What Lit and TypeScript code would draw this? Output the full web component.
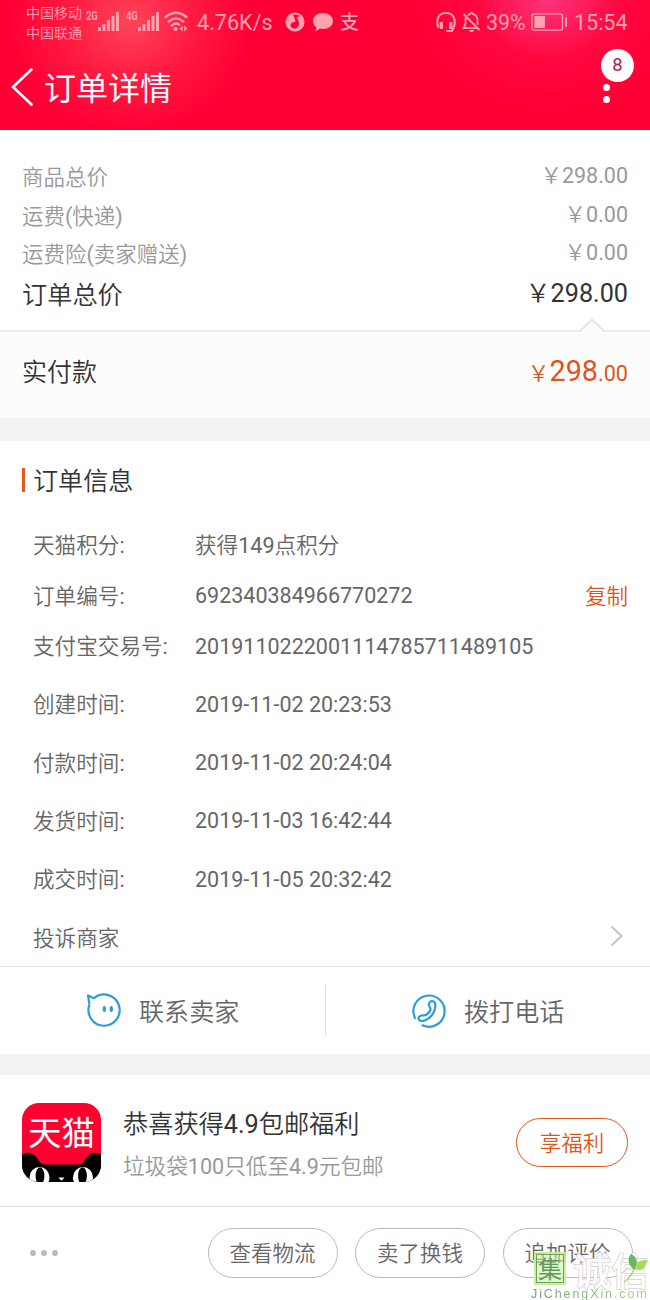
import { LitElement, html, css, svg } from "lit";
import { customElement } from "lit/decorators.js";

interface InfoRow {
  label: string;
  value: string;
  copy?: boolean;
}

const prices = [
  { label: "商品总价", value: "￥298.00" },
  { label: "运费(快递)", value: "￥0.00" },
  { label: "运费险(卖家赠送)", value: "￥0.00" },
];

const ids: InfoRow[] = [
  { label: "天猫积分:", value: "获得149点积分" },
  { label: "订单编号:", value: "692340384966770272", copy: true },
  { label: "支付宝交易号:", value: "2019110222001114785711489105" },
];

const times: InfoRow[] = [
  { label: "创建时间:", value: "2019-11-02 20:23:53" },
  { label: "付款时间:", value: "2019-11-02 20:24:04" },
  { label: "发货时间:", value: "2019-11-03 16:42:44" },
  { label: "成交时间:", value: "2019-11-05 20:32:42" },
];

const signalBars = [4, 7, 11, 15, 19].map(
  (h, i) => svg`<rect x=${i * 4.5} y=${20 - h} width="3" height=${h} rx="0.6"/>`
);

@customElement("status-bar")
export class StatusBar extends LitElement {
  static styles = css`
    :host { display: block; height: 44px; color: #ffa3b0; }
    .bar { display: flex; height: 44px; padding: 0 22px 0 26px; }
    .carriers { width: 60px; padding-top: 4px; font-size: 14px; line-height: 19.5px; white-space: nowrap; }
    .net { width: 12px; font: bold 12px/12px "Roboto", sans-serif; transform: scaleX(0.78); transform-origin: left; margin-top: 10px; }
    svg { display: block; flex: none; fill: currentColor; }
    .sig { width: 22px; height: 20px; margin-top: 11px; }
    .sig1 { margin-right: 6px; }
    .wifi { width: 25px; height: 22px; margin: 11px 0 0 4px; }
    .speed { width: 89px; margin-left: 8px; font-size: 21.6px; line-height: 46px; white-space: nowrap; }
    .app { width: 20px; height: 20px; margin-top: 12px; margin-left: -1px; }
    .chat { width: 22px; height: 20px; margin: 12px 0 0 7px; }
    .pay { width: 20px; margin-left: 6px; font-family: "Noto Sans CJK SC", sans-serif; font-size: 19px; line-height: 42px; font-weight: 500; }
    .fill { flex: 1; }
    .head { width: 20px; height: 22px; margin: 11px -1px 0 0; }
    .bell { width: 19px; height: 22px; margin: 11px 0 0 7px; }
    .pct { margin-left: 5px; width: 44px; font-size: 21.4px; line-height: 46px; }
    .bat { width: 37px; height: 20px; margin-top: 12px; }
    .clock { width: 54px; margin-left: 7px; font-size: 21.5px; line-height: 46px; }
  `;
  render() {
    return html`<div class="bar">
      <div class="carriers"><div>中国移动</div><div>中国联通</div></div>
      <span class="net">2G</span>
      <svg class="sig sig1" viewBox="0 0 22 20">${signalBars}</svg>
      <span class="net">4G</span>
      <svg class="sig" viewBox="0 0 22 20">${signalBars}</svg>
      <svg class="wifi" viewBox="0 0 25 22">
        <g fill="none" stroke="currentColor" stroke-width="2.3" stroke-linecap="round">
          <path d="M1.6 6Q12 -2.6 22.4 6"/><path d="M4.6 10.6Q12 4.2 19.4 10.6"/><path d="M7.6 14.6Q11.6 11 15.2 13.6"/>
        </g>
        <circle cx="11.6" cy="18" r="2.1"/><path d="M18.6 14.5v6l-3-3zM20.2 14.5v6l3-3z"/>
      </svg>
      <span class="speed">4.76K/s</span>
      <svg class="app" viewBox="0 0 20 20"><path fill-rule="evenodd" d="M10 .5a9.5 9.5 0 1 1 0 19a9.5 9.5 0 1 1 0-19zM8 2.500c3 .2 5.900.6 8 1.500c-2.200.4-4 1-4.400 1.700c1.500 2 2.600 4 2.400 6.200c-.2 2.800-2.200 4.600-4.600 4.600c-2.200 0-4-1.400-3.800-3.400c.2-2.200 2.500-3.500 5-3c-.4-2.800-1.600-5.200-2.600-7.600z"/></svg>
      <svg class="chat" viewBox="0 0 22 20"><path d="M11 1c5.700 0 10 3.500 10 8s-4.300 8-10 8c-1.200 0-2.200-.1-3.200-.4c-1.200 1.400-2.700 2.100-4.500 2.400c.8-1.200 1.100-2.300 1-3.800C2.200 13.700 1 11.500 1 9c0-4.500 4.300-8 10-8z"/></svg>
      <span class="pay">支</span>
      <span class="fill"></span>
      <svg class="head" viewBox="0 0 20 22"><g fill="none" stroke="currentColor" stroke-width="2"><path d="M2 16C-.2 7.500 3 2 10 2s10.200 5.500 8 14l-2 4h-5" stroke-linecap="round"/></g><rect x="3.600" y="11" width="3.400" height="7" rx="1"/><rect x="13" y="11" width="3.400" height="7" rx="1"/></svg>
      <svg class="bell" viewBox="0 0 19 22"><g fill="none" stroke="currentColor" stroke-width="1.800"><path d="M3.500 7v6l-2 4h14.500M5.500 4.300L8 3.200C8 1.600 11 1.600 11 3.200c3 .8 4.500 3 4.500 6v4.500M1.500 3l16 16"/></g><path d="M7 19h5a2.500 2 0 0 1-5 0z"/></svg>
      <span class="pct">39%</span>
      <svg class="bat" viewBox="0 0 37 20"><rect x="2" y="1.800" width="30.500" height="16.400" rx="2.500" fill="none" stroke="currentColor" stroke-width="1.300"/><rect x="4.400" y="4" width="10.500" height="12"/><rect x="35" y="5" width="2" height="10" rx="1"/></svg>
      <span class="clock">15:54</span>
    </div>`;
  }
}

@customElement("tmall-logo")
export class TmallLogo extends LitElement {
  static styles = css`
    :host { display: block; width: 79px; height: 79px; }
    .logo { position: relative; width: 79px; height: 79px; border-radius: 17px; overflow: hidden; background: #ff0030; }
    .name { font-family: "Noto Sans CJK SC", sans-serif; font-size: 33.5px; line-height: 55px; color: #fff; text-align: center; font-weight: 400; }
    svg { position: absolute; left: 0; top: 0; display: block; }
  `;
  render() {
    return html`<div class="logo">
      <div class="name">天猫</div>
      <svg width="79" height="79" viewBox="0 0 79 79">
        <path d="M0 52Q3 49 8 50Q14 52 18.500 60Q20.500 61.500 24 61.500H56Q60 61.500 61.500 59Q66 51 71 50Q77 49 79 52V79H0z"/>
        <g fill="#fff"><ellipse cx="17.500" cy="74.500" rx="10" ry="10.500"/><ellipse cx="61" cy="74.500" rx="10" ry="10.500"/><path d="M36.500 74.500h6l-3 3.200z"/></g>
        <ellipse cx="18" cy="73" rx="4.400" ry="8.800"/><ellipse cx="60.500" cy="73" rx="4.400" ry="8.800"/>
      </svg>
    </div>`;
  }
}

@customElement("site-mark")
export class SiteMark extends LitElement {
  static styles = css`
    :host { display: block; width: 120px; height: 49px; }
    .row { display: flex; height: 35px; }
    .seal { box-sizing: border-box; width: 32px; height: 33px; margin: 0 0 0 4px; border: 2px solid rgba(200, 236, 140, 0.8); background: rgba(205, 240, 150, 0.55); }
    .inner { box-sizing: border-box; height: 29px; border: 1.5px solid #659f69; font-family: "Noto Sans CJK SC", sans-serif; font-size: 24px; line-height: 25px; text-align: center; color: #5a9a6a; }
    .words { display: flex; margin-left: 7px; font-family: "Noto Sans CJK SC", sans-serif; font-size: 38px; line-height: 33px; font-weight: 500; color: rgba(255, 255, 255, 0.95); -webkit-text-stroke: 1.4px #d2d2d2; paint-order: stroke fill; }
    .leaf { position: absolute; left: 93px; top: 1px; }
    .site { padding-left: 1px; font-size: 12.5px; line-height: 14px; letter-spacing: 1.9px; white-space: nowrap; font-family: "Liberation Sans", sans-serif; background: linear-gradient(90deg, #5f9f80, #8fc078 60%, #abd37d); -webkit-background-clip: text; color: transparent; }
  `;
  render() {
    return html`<div class="row">
        <div class="seal"><div class="inner">集</div></div>
        <div class="words"><span>诚</span><span>信</span></div>
      </div>
      <svg class="leaf" width="26" height="32" viewBox="0 0 26 32">
        <path d="M9 15C4 9 5 4 8 1C13 3 16 9 12 16Q11 17 9 15z" fill="#69b768"/>
        <path d="M12 16C13 9 16 7 24 7C23 15 19 19 12 16z" fill="#a8d95c"/>
        <path d="M11 16Q8 24 1 29" fill="none" stroke="#a7d681" stroke-width="1.500"/>
      </svg>
      <div class="site">JiChengXin.com</div>`;
  }
}

@customElement("app-root")
export class AppRoot extends LitElement {
  static styles = css`
    :host { display: block; width: 650px; height: 1300px; overflow: hidden; position: relative; background: #fff; color: #666;
      font-family: "Roboto", "Noto Sans CJK SC DemiLight", "Noto Sans CJK SC Light", "Noto Sans CJK SC", sans-serif; font-size: 21.5px; font-weight: 400; }
    svg { display: block; flex: none; }
    .header { height: 130px; color: #fff;
      background: radial-gradient(ellipse 130px 110px at 548px 0, rgba(255, 60, 135, 0.85), rgba(255, 20, 80, 0.35) 55%, transparent),
        radial-gradient(ellipse 120px 110px at 130px 22px, rgba(255, 80, 95, 0.85), rgba(255, 50, 75, 0.5) 55%, transparent), #ff0036; }
    .nav { position: relative; display: flex; height: 86px; padding-left: 11px; }
    .back { margin-top: 22px; }
    .title { margin-left: 10px; font-family: "Noto Sans CJK SC", sans-serif; font-size: 32px; line-height: 84px; font-weight: 400; }
    .dots { position: absolute; left: 603px; top: 40px; display: grid; gap: 5px; }
    .dot { width: 7px; height: 7px; border-radius: 50%; background: #fff; }
    .badge { position: absolute; left: 601px; top: 5px; width: 33px; height: 33px; border-radius: 50%; background: #fff; color: #b52045; font-size: 18.5px; line-height: 33px; text-align: center; }
    .prices { box-sizing: border-box; height: 200px; padding: 29px 22px 0; color: #999; }
    .price { display: flex; justify-content: space-between; height: 38.6px; line-height: 38.6px; }
    .amount { margin-top: -2px; }
    .total { height: 44px; line-height: 44px; font-size: 25.2px; color: #333; margin-top: -1px; }
    .paid { box-sizing: border-box; position: relative; display: flex; justify-content: space-between; height: 88px; padding: 0 22px; border-top: 2px solid #ebebeb; background: #fcfcfc; color: #333; font-size: 25px; line-height: 81px; }
    .notch { position: absolute; left: 579px; top: -14px; }
    .sum { color: #dd5519; font-size: 21.6px; line-height: 78px; }
    .big { font-size: 28.8px; }
    .band { height: 23px; background: #f2f2f2; }
    .slim { height: 21px; }
    .info { box-sizing: border-box; height: 525px; padding: 0 22px 0 33px; }
    .heading { display: flex; align-items: center; height: 79px; margin-left: -11px; color: #333; font-size: 25.1px; gap: 8px; }
    .heading-text { margin-top: -4px; }
    .tick { width: 3px; height: 24px; margin-top: -2px; background: #e4581c; }
    .row { display: flex; align-items: center; height: 50.500px; }
    .time { height: 58.400px; }
    .times { padding-top: 3.500px; }
    .label { width: 162px; white-space: nowrap; margin-top: -3px; font-size: 21.6px; }
    .value { flex: 1; }
    .cjk { margin-top: -3px; font-size: 21.6px; }
    .orange { color: #dd5519; margin-top: -3px; }
    .arrow { margin-right: 5px; margin-top: -3px; }
    .contact { box-sizing: border-box; display: grid; grid-template-columns: 1fr 1fr; height: 88px; border-top: 1.500px solid #e3e3e3; font-size: 25.1px; }
    .cell { display: flex; align-items: center; padding-left: 86px; gap: 17px; height: 87px; }
    .cell + .cell { position: relative; }
    .cell-text { margin-top: -1px; }
    .sep { position: absolute; left: 0; top: 18px; width: 1px; height: 51px; background: #ddd; }
    .promo { box-sizing: border-box; display: flex; height: 132px; padding: 28px 22px 0; border-bottom: 1.500px solid #e2e2e2; }
    .text { flex: 1; margin-left: 22px; }
    .main { color: #333; font-size: 25.2px; line-height: 43px; }
    .sub { color: #999; font-size: 21.6px; line-height: 41px; }
    .pill { box-sizing: border-box; display: block; width: 130px; height: 50px; border: 1.300px solid #bbb; border-radius: 25px; text-align: center; line-height: 50px; }
    .benefit { width: 112px; height: 49px; margin-top: 15px; border-color: #dd5519; color: #dd5519; }
    .footer { display: flex; padding: 21px 17.500px 0 30px; height: 72px; }
    .more { display: flex; flex: 1; gap: 5px; padding-top: 22px; }
    .pip { width: 6px; height: 6px; border-radius: 50%; background: #bbb; }
    .actions { display: flex; gap: 17.500px; }
    .mark { position: absolute; left: 530px; top: 1252px; }
  `;

  private row(r: InfoRow, cls: string) {
    const hasHan = /[\u4e00-\u9fff]/.test(r.value);
    return html`<div class=${cls}>
      <span class="label">${r.label}</span><span class=${hasHan ? "value cjk" : "value"}>${r.value}</span>
      ${r.copy ? html`<span class="orange">复制</span>` : ""}
    </div>`;
  }

  render() {
    return html`
      <header class="header">
        <status-bar></status-bar>
        <div class="nav">
          <svg class="back" width="23" height="42" viewBox="0 0 23 42"><path d="M20.500 3.500L2 21L20.500 38.500" fill="none" stroke="#fff" stroke-width="2.600" stroke-linecap="round"/></svg>
          <span class="title">订单详情</span>
          <div class="dots"><div class="dot"></div><div class="dot"></div></div>
          <div class="badge">8</div>
        </div>
      </header>
      <section class="prices">
        ${prices.map((p) => html`<div class="price"><span>${p.label}</span><span class="amount">${p.value}</span></div>`)}
        <div class="price total"><span>订单总价</span><span class="amount">￥298.00</span></div>
      </section>
      <section class="paid">
        <svg class="notch" width="26" height="15" viewBox="0 0 26 15"><path d="M1 13L13 1.500L25 13V15H1z" fill="#fcfcfc"/><path d="M1 13L13 1.500L25 13" fill="none" stroke="#dfdfdf" stroke-width="1.600"/></svg>
        <span>实付款</span>
        <span class="sum">￥<span class="big">298</span>.00</span>
      </section>
      <div class="band"></div>
      <section class="info">
        <div class="heading"><div class="tick"></div><span class="heading-text">订单信息</span></div>
        ${ids.map((r) => this.row(r, "row"))}
        <div class="times">
          ${times.map((r) => this.row(r, "row time"))}
          <div class="row time"><span class="value cjk">投诉商家</span>
            <svg class="arrow" width="13" height="22" viewBox="0 0 13 22"><path d="M1.500 1.500L11.500 11L1.500 20.500" fill="none" stroke="#c4c4c4" stroke-width="2"/></svg>
          </div>
        </div>
      </section>
      <section class="contact">
        <div class="cell">
          <svg width="36" height="36" viewBox="0 0 36 36"><path d="M3.500 11.500L2 2.500L8 5.200A15.600 15.600 0 1 1 3.500 11.500" fill="none" stroke="#2b9ed6" stroke-width="2.200" stroke-linejoin="round"/><ellipse cx="18.300" cy="16" rx="1.700" ry="3" fill="#2b9ed6"/><ellipse cx="25.300" cy="16" rx="1.700" ry="3" fill="#2b9ed6"/></svg>
          <span class="cell-text">联系卖家</span>
        </div>
        <div class="cell">
          <div class="sep"></div>
          <svg width="36" height="36" viewBox="0 0 36 36"><g fill="none" stroke="#2b9ed6" stroke-width="2.200" stroke-linecap="round" stroke-linejoin="round"><path d="M4 25A15.600 15.600 0 1 1 11.500 32.300"/><path d="M18.300 13C17 9.500 20 7.200 22.500 8.500C25.500 10 24.500 16 22.300 20C19.800 24.500 15 28 11 28C7 28 6.500 24 9.500 22.700C11.500 21.700 13 23 15.500 21.700C18 20 19.500 18 19.500 16C19.500 14.800 18.800 14 18.300 13Z"/></g></svg>
          <span class="cell-text">拨打电话</span>
        </div>
      </section>
      <div class="band slim"></div>
      <section class="promo">
        <tmall-logo></tmall-logo>
        <div class="text"><div class="main">恭喜获得4.9包邮福利</div><div class="sub">垃圾袋100只低至4.9元包邮</div></div>
        <span class="pill benefit">享福利</span>
      </section>
      <footer class="footer">
        <div class="more"><div class="pip"></div><div class="pip"></div><div class="pip"></div></div>
        <div class="actions"><span class="pill">查看物流</span><span class="pill">卖了换钱</span><span class="pill">追加评价</span></div>
      </footer>
      <site-mark class="mark"></site-mark>
    `;
  }
}
